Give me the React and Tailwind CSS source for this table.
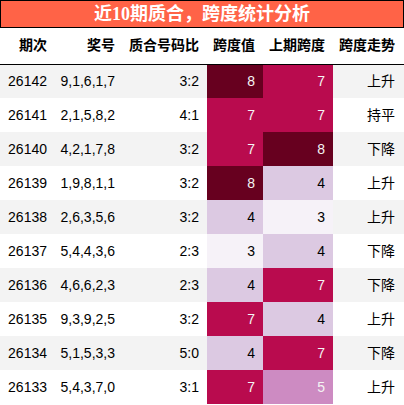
const ROWS = [
  ['26142', '9,1,6,1,7', '3:2', 8, 7, '上升'],
  ['26141', '2,1,5,8,2', '4:1', 7, 7, '持平'],
  ['26140', '4,2,1,7,8', '3:2', 7, 8, '下降'],
  ['26139', '1,9,8,1,1', '3:2', 8, 4, '上升'],
  ['26138', '2,6,3,5,6', '3:2', 4, 3, '上升'],
  ['26137', '5,4,4,3,6', '2:3', 3, 4, '下降'],
  ['26136', '4,6,6,2,3', '2:3', 4, 7, '下降'],
  ['26135', '9,3,9,2,5', '3:2', 7, 4, '上升'],
  ['26134', '5,1,5,3,3', '5:0', 4, 7, '下降'],
  ['26133', '5,4,3,7,0', '3:1', 7, 5, '上升'],
];

// PuRd gradient, min 3 / max 8 per column
const SPAN_COLOR = {
  3: 'bg-[#f6f2f8] text-black',
  4: 'bg-[#dcc9e2] text-black',
  5: 'bg-[#cd8bc2] text-[#f4f4f4]',
  7: 'bg-[#b90b4e] text-[#f4f4f4]',
  8: 'bg-[#67001f] text-[#f4f4f4]',
};

const HEADERS = ['期次', '奖号', '质合号码比', '跨度值', '上期跨度', '跨度走势'];

export default function App() {
  return (
    <div className="w-[404px] h-[405px] bg-white overflow-hidden font-['Liberation_Sans','Noto_Sans_CJK_SC',sans-serif] text-[14px] text-black">
      <div className="h-[28px] border border-black bg-[#ff6347] flex items-center justify-center">
        <h1 className="text-white font-bold text-[18px] leading-[26px] font-['Liberation_Serif','Noto_Sans_CJK_SC',serif]">
          近10期质合，跨度统计分析
        </h1>
      </div>
      <table className="w-[404px] table-fixed border-collapse">
        <colgroup>
          <col className="w-[55px]" />
          <col className="w-[68px]" />
          <col className="w-[84px]" />
          <col className="w-[56px]" />
          <col className="w-[70px]" />
          <col className="w-[71px]" />
        </colgroup>
        <thead>
          <tr className="h-[36px] border-b border-black">
            {HEADERS.map((h, i) => (
              <th key={h} className={`font-bold text-right p-0 ${i === 5 ? 'pr-[9px]' : 'pr-2'}`}>{h}</th>
            ))}
          </tr>
        </thead>
        <tbody>
          {ROWS.map((r, idx) => (
            <tr key={r[0]} className={`h-[34px] ${idx % 2 === 0 ? 'bg-[#f3f3f3]' : 'bg-white'}`}>
              <td className="text-right p-0 pr-2">{r[0]}</td>
              <td className="text-right p-0 pr-2">{r[1]}</td>
              <td className="text-right p-0 pr-2">{r[2]}</td>
              <td className={`text-right p-0 pr-2 ${SPAN_COLOR[r[3]]}`}>{r[3]}</td>
              <td className={`text-right p-0 pr-2 ${SPAN_COLOR[r[4]]}`}>{r[4]}</td>
              <td className="text-right p-0 pr-[9px]">{r[5]}</td>
            </tr>
          ))}
        </tbody>
      </table>
    </div>
  );
}
